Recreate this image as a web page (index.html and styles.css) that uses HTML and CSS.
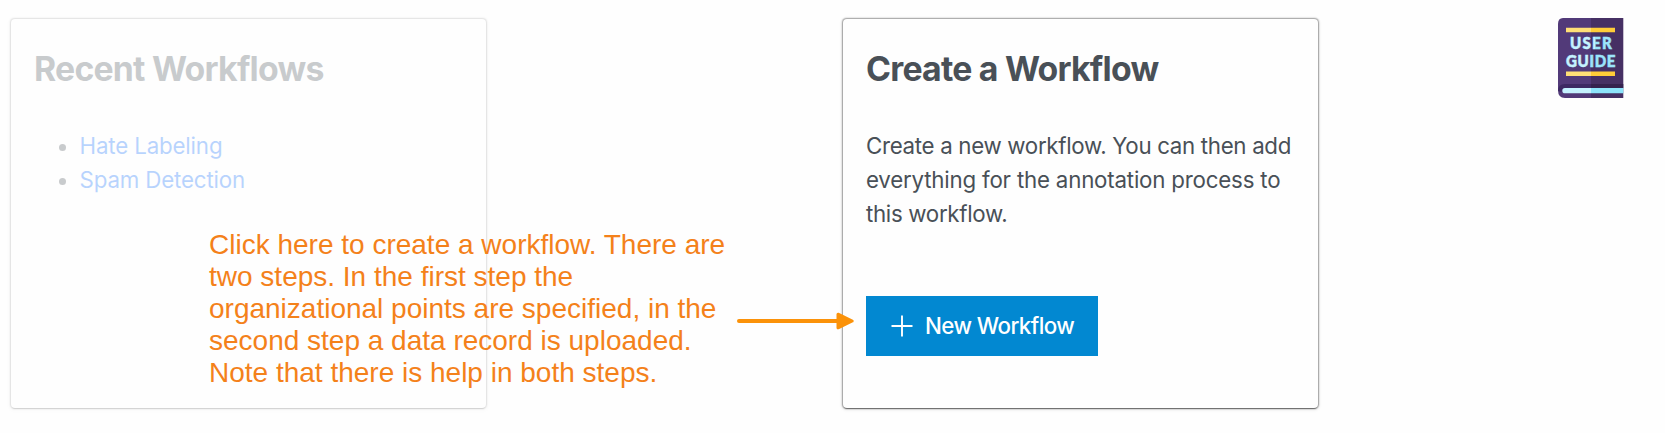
FILE: index.html
```html
<!DOCTYPE html>
<html lang="en">
<head>
<meta charset="utf-8">
<title>Workflows</title>
<link rel="stylesheet" href="styles.css">
</head>
<body>
<main class="board">
  <section class="card card-faded">
    <h2 class="title">Recent Workflows</h2>
    <ul class="links">
      <li><a class="link" href="#">Hate Labeling</a></li>
      <li><a class="link" href="#">Spam Detection</a></li>
    </ul>
  </section>
  <section class="card">
    <h2 class="title">Create a Workflow</h2>
    <p class="text">Create a new workflow. You can then add<br><span class="text-wide">everything for the annotation process to</span><br>this workflow.</p>
    <button class="button" type="button">
      <svg class="plus" viewBox="0 0 22 22"><path d="M11 .5v21M.5 11h21" fill="none" stroke="currentColor" stroke-width="1.9"/></svg>
      <span>New Workflow</span>
    </button>
  </section>
  <a class="guide" href="#" aria-label="User guide">
    <svg width="66" height="80" viewBox="0 0 66 80">
      <path d="M5 0H33V80H7Q0 80 0 72V6Q0 0 5 0Z" fill="#523a79"/>
      <path d="M33 0H65.3V80H33Z" fill="#463064"/>
      <path d="M7 66H33V70H7Q3.5 70 3.5 74L0 73Q0 66 7 66Z" fill="#3d2963"/>
      <path d="M33 66H65.3V70H33Z" fill="#35224f"/>
      <path d="M7 70H33V75.3H7A2.65 2.65 0 0 1 7 70Z" fill="#c5f2ff"/>
      <path d="M33 70H65.3V75.3H33Z" fill="#8de4fb"/>
      <path d="M8 9.8H33V14.3H8ZM8 53.5H33V58H8Z" fill="#ffdf76"/>
      <path d="M33 9.8H57V14.3H33ZM33 53.5H57V58H33Z" fill="#ffcd38"/>
      <defs>
        <linearGradient id="cover" gradientUnits="userSpaceOnUse" x1="0" y1="0" x2="56" y2="0">
          <stop offset=".5" stop-color="#c5f2ff"/><stop offset=".5" stop-color="#9be5fb"/>
        </linearGradient>
      </defs>
      <g class="guide-text" fill="url(#cover)" stroke="url(#cover)" stroke-width=".5">
        <text transform="translate(12 31.2) scale(.9 1)" textLength="46.5">USER</text>
        <text transform="translate(8 49) scale(.9 1)" textLength="55">GUIDE</text>
      </g>
    </svg>
  </a>
  <p class="note">Click here to create a workflow. There are<br>two steps. In the first step the<br>organizational points are specified, in the<br>second step a data record is uploaded.<br>Note that there is help in both steps.</p>
  <svg class="arrow" width="120" height="20" viewBox="0 0 120 20">
    <path d="M3 10H103" stroke="#fb9209" stroke-width="4" stroke-linecap="round"/>
    <path d="M102 3.2L116.2 10L102 16.8Z" fill="#fb9209" stroke="#fb9209" stroke-width="3" stroke-linejoin="round"/>
  </svg>
</main>
</body>
</html>
```
FILE: styles.css
```css
* { box-sizing: border-box; }
body {
  margin: 0;
  background: #fefefe;
  font-family: Inter, "Liberation Sans", sans-serif;
  color: #495057;
}
.board {
  position: relative;
  display: grid;
  grid-template-columns: 475px 475px 66px;
  column-gap: 357px;
  justify-content: start;
  align-items: start;
  height: 433px;
  padding: 19px 0 0 11px;
}
.board > .guide { margin: -1px 0 0 -117px; }
.card {
  height: 389px;
  padding: 31px 23px;
  border-radius: 4px;
  background: #fefefe;
  box-shadow: 0 2px 1px -1px rgba(0,0,0,.35), 0 0 1.5px .5px rgba(0,0,0,.36), 0 1px 4px rgba(0,0,0,.12);
}
.card-faded { opacity: .29; }
.title {
  margin: 0;
  font-size: 33.8px;
  line-height: 38px;
  font-weight: 700;
  letter-spacing: -.77px;
}
.links {
  margin: 41px 0 0;
  padding-left: 45.5px;
  font-size: 22.3px;
  line-height: 34.2px;
  letter-spacing: -.15px;
}
.link { color: #0d6efd; text-decoration: none; }
.text {
  margin: 41px 0 0;
  font-size: 22.3px;
  line-height: 34.2px;
  letter-spacing: -.32px;
  white-space: nowrap;
}
.text-wide { letter-spacing: -.2px; }
.button {
  display: flex;
  align-items: center;
  gap: 12px;
  width: 232px;
  height: 60px;
  margin: 64px 0 0;
  padding: 1px 25px 0;
  border: 0;
  background: #0288d1;
  color: #fff;
  font: 500 22.3px/34px Inter, sans-serif;
  letter-spacing: -.55px;
  white-space: nowrap;
}
.plus { width: 22px; height: 22px; flex: none; }
.guide svg { display: block; }
.guide-text { font: 900 16.8px Lato, sans-serif; }
.note {
  position: absolute;
  left: 209px;
  top: 229px;
  margin: 0;
  font: 28px/32px "Liberation Sans", Arial, sans-serif;
  color: #f4811a;
  white-space: nowrap;
}
.arrow { position: absolute; left: 736px; top: 311px; }
```
